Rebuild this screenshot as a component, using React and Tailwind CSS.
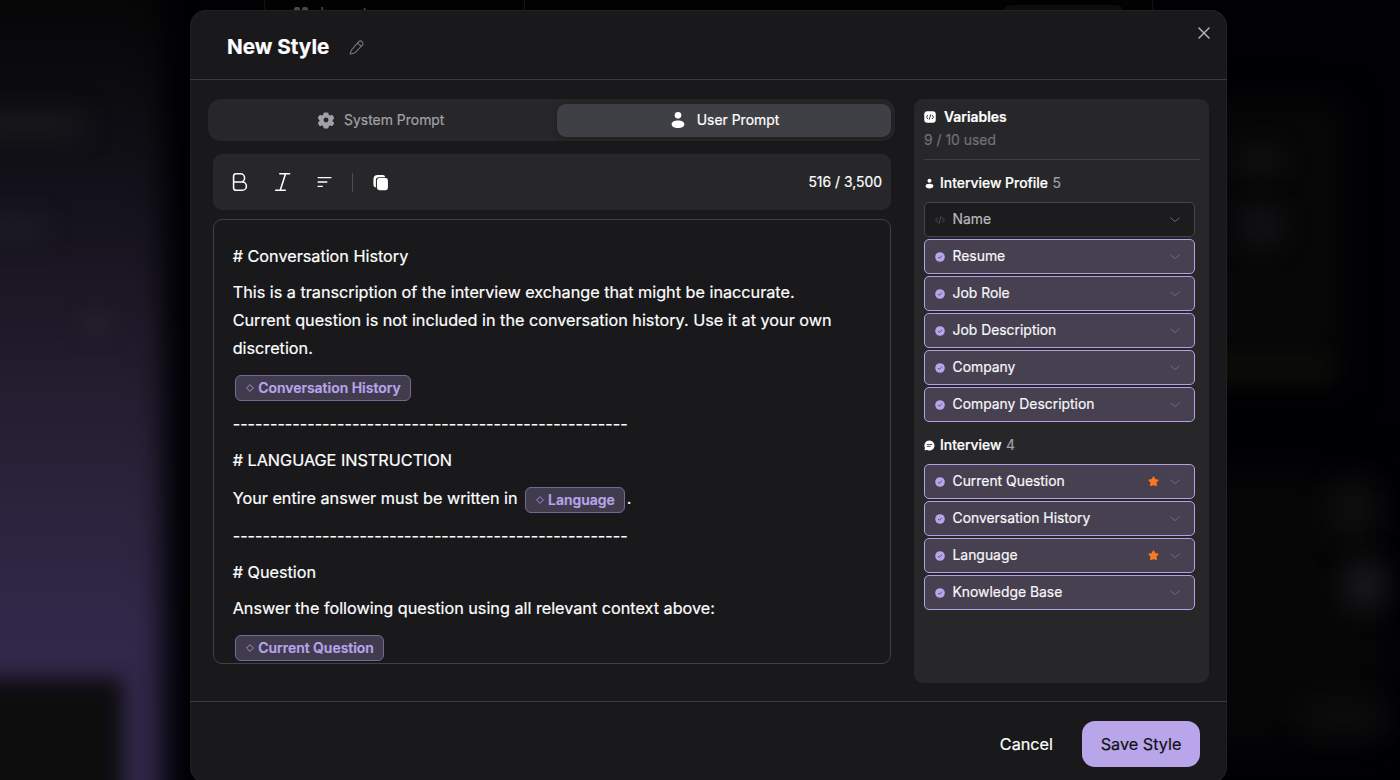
import React from "react";
import { FiX } from "react-icons/fi";

const PROFILE_VARS = [
  { name: "Name", used: false },
  { name: "Resume", used: true },
  { name: "Job Role", used: true },
  { name: "Job Description", used: true },
  { name: "Company", used: true },
  { name: "Company Description", used: true },
];

const INTERVIEW_VARS = [
  { name: "Current Question", used: true, starred: true },
  { name: "Conversation History", used: true },
  { name: "Language", used: true, starred: true },
  { name: "Knowledge Base", used: true },
];

const DIVIDER = "-".repeat(53);

function PenIcon({ className }) {
  return (
    <svg viewBox="0 0 24 24" fill="none" stroke="currentColor" strokeWidth="1.7" strokeLinejoin="round" className={className}>
      <path d="M14.4 3.800l.9-.9a4.100 4.100 0 0 1 5.800 5.800L10.900 18.900c-.8.8-1.200 1.100-1.600 1.400-.5.4-1.100.7-1.700 1L1.700 22.300l1.800-5.100c.3-.7.6-1.300 1-1.800.3-.4.7-.8 1.400-1.500L14.400 3.800z" />
      <path d="M14.400 3.800s.1 2 1.800 3.700 3.800 1.900 3.800 1.900" />
    </svg>
  );
}

function GearIcon({ className }) {
  return (
    <svg viewBox="0 0 24 24" fill="currentColor" fillRule="evenodd" className={className}>
      <path d="M14.3 2.2C13.9 2 13.4 2 12.4 2h-.8c-1 0-1.5 0-1.9.2-.5.2-.9.6-1.1 1.1-.1.3-.1.6-.2 1-.1.6-.4 1.2-.9 1.5-.5.3-1.2.3-1.8 0-.4-.2-.7-.3-1-.4-.5-.1-1.100 0-1.500.4-.4.3-.6.7-1.100 1.500s-.7 1.300-.8 1.700c-.1.5.1 1.100.4 1.500.2.2.4.4.8.7.5.3.9.9.9 1.500s-.4 1.200-.9 1.500c-.4.2-.6.4-.8.7-.3.4-.5.9-.4 1.500.1.400.3.900.8 1.700s.7 1.200 1.100 1.500c.4.3 1 .5 1.500.4.300 0 .600-.2 1-.4.600-.3 1.200-.3 1.800 0 .5.300.9.900.9 1.500 0 .4.100.7.200 1 .200.500.600.900 1.100 1.100.400.200.900.200 1.900.200h.8c1 0 1.500 0 1.900-.2.500-.2.900-.6 1.100-1.100.1-.3.200-.6.200-1 0-.600.400-1.200.900-1.500.500-.3 1.200-.3 1.800 0 .400.200.700.300 1 .400.500.100 1.100-.100 1.500-.400.400-.3.600-.7 1.100-1.500s.7-1.300.8-1.700c.100-.5-.1-1.100-.4-1.500-.2-.2-.4-.4-.8-.7-.5-.3-.9-.9-.9-1.500s.4-1.200.9-1.500c.4-.2.600-.4.8-.7.300-.4.500-.9.400-1.500-.1-.4-.3-.9-.8-1.700s-.7-1.200-1.100-1.500c-.4-.3-1-.5-1.500-.4-.3 0-.6.200-1 .4-.6.300-1.200.3-1.800 0-.5-.3-.9-.9-.9-1.500 0-.4-.1-.7-.2-1-.2-.5-.6-.9-1.100-1.100zM12 15.300a3.300 3.300 0 1 0 0-6.600 3.300 3.300 0 0 0 0 6.600z" />
    </svg>
  );
}

function UserIcon({ className }) {
  return (
    <svg viewBox="0 0 24 24" fill="currentColor" className={className}>
      <circle cx="12" cy="5.800" r="4.400" />
      <path d="M12 12.500c5 0 8.500 1.700 8.500 5.200 0 3.200-3.500 5-8.500 5s-8.500-1.800-8.500-5c0-3.500 3.500-5.200 8.500-5.200z" />
    </svg>
  );
}

function BoldIcon({ className }) {
  return (
    <svg viewBox="0 0 24 24" fill="none" stroke="currentColor" strokeWidth="1.700" className={className}>
      <path d="M5 5.500A2.500 2.500 0 0 1 7.500 3h5a4.500 4.500 0 0 1 0 9H5zM5 12h9.500a4.500 4.500 0 0 1 0 9h-7A2.500 2.500 0 0 1 5 18.500z" />
    </svg>
  );
}

function ItalicIcon({ className }) {
  return (
    <svg viewBox="0 0 24 24" fill="none" stroke="currentColor" strokeWidth="1.700" strokeLinecap="round" className={className}>
      <path d="M8.500 3h10.700M4 21h10.500M14.800 3L9 21" />
    </svg>
  );
}

function TextLinesIcon({ className }) {
  return (
    <svg viewBox="0 0 24 24" fill="none" stroke="currentColor" strokeWidth="1.500" strokeLinecap="round" className={className}>
      <path d="M4.500 7.200h14M4.500 12h9.500M4.500 16.800H9" />
    </svg>
  );
}

function CopyIcon({ className }) {
  return (
    <svg viewBox="0 0 24 24" fill="currentColor" className={className}>
      <rect x="7" y="5.800" width="15.500" height="17.200" rx="3.500" />
      <path d="M5.500 19.200A3.500 3.500 0 0 1 2 15.700V8c0-4.400 1.800-6.500 6-6.500h7.200a3.600 3.600 0 0 1 3.500 3H10c-3.200 0-4.500 1.600-4.500 4.500z" />
    </svg>
  );
}

function CodeSquareIcon({ className }) {
  return (
    <svg viewBox="0 0 24 24" className={className}>
      <rect x="0.500" y="0.500" width="23" height="23" rx="6" fill="#ffffff" />
      <path d="M7.500 8.500L5 12l2.500 3.500M16.500 8.500L19 12l-2.500 3.500M13.300 7.500l-2.600 9" fill="none" stroke="#27272a" strokeWidth="1.800" strokeLinecap="round" />
    </svg>
  );
}

function CodeIcon({ className }) {
  return (
    <svg viewBox="0 0 24 24" fill="none" stroke="currentColor" strokeWidth="1.800" strokeLinecap="round" strokeLinejoin="round" className={className}>
      <path d="M6.500 6.500L1.500 12l5 5.500M17.500 6.500l5 5.500-5 5.500M14.300 3.500l-4.600 17" />
    </svg>
  );
}

function CheckIcon({ className }) {
  return (
    <svg viewBox="0 0 24 24" className={className}>
      <circle cx="12" cy="12" r="11.500" fill="#b8a5ea" />
      <path d="M8 12.700l2.500 2.500L16 9.500" fill="none" stroke="#46404f" strokeWidth="2" strokeLinecap="round" strokeLinejoin="round" />
    </svg>
  );
}

function ChatIcon({ className }) {
  return (
    <svg viewBox="0 0 24 24" className={className}>
      <path d="M12 1a11 11 0 1 1-4.900 20.900c-.6-.3-1.200-.3-1.900-.1l-2.500.7c-.9.200-1.700-.6-1.500-1.500l.7-2.500c.2-.6.100-1.300-.1-1.900A11 11 0 0 1 12 1z" fill="#ffffff" />
      <path d="M7 10h10M7 14h6.500" stroke="#27272a" strokeWidth="1.800" strokeLinecap="round" />
    </svg>
  );
}

function StarIcon({ className }) {
  return (
    <svg viewBox="0 0 24 24" fill="currentColor" stroke="currentColor" strokeWidth="3" strokeLinejoin="round" className={className}>
      <path d="M12 2.500l2.900 5.400 6.600 1.200-4.400 4.800.9 6.600-6-2.200-6 2.200.9-6.600L2.500 9.100l6.600-1.200z" />
    </svg>
  );
}

function ChevronIcon({ className }) {
  return (
    <svg viewBox="0 0 10 6" fill="none" stroke="currentColor" strokeWidth="0.900" strokeLinecap="round" strokeLinejoin="round" className={className}>
      <path d="M.7 1L5 4.600 9.300 1" />
    </svg>
  );
}

function Chip({ children }) {
  return (
    <span className="inline-flex h-[26px] items-center rounded-[6px] border border-[#776996] bg-[#413b4e] pr-[9px] pl-[10px] text-[13.950px] font-semibold text-[#b8a5ea]">
      <svg viewBox="0 0 10 10" fill="none" stroke="currentColor" className="mr-[4.500px] h-[8px] w-[8px]">
        <path d="M5 .8L9.200 5 5 9.200.8 5z" />
      </svg>
      {children}
    </span>
  );
}

function VariableRow({ name, used, starred }) {
  return (
    <div
      className={
        used
          ? "flex h-[35px] items-center rounded-[5px] border border-[#b3a1e3] bg-[#464051] pr-[14px] pl-[10px] text-[#f7f7f8]"
          : "flex h-[35px] items-center rounded-[5px] border border-[#45454b] bg-[#1c1c1e] pr-[14px] pl-[10px] text-[#b9b9be]"
      }
    >
      {used ? <CheckIcon className="h-[10px] w-[10px]" /> : <CodeIcon className="h-[10px] w-[10px] text-[#5c5c63]" />}
      <span className="ml-[7.500px] flex-1 text-[13.900px]">{name}</span>
      {starred && <StarIcon className="mr-[11px] h-[11px] w-[11px] text-[#f97a1f]" />}
      <ChevronIcon className="h-[6px] w-[10px] text-[#72707b]" />
    </div>
  );
}

function VariableGroup({ icon, title, count, items }) {
  return (
    <section>
      <div className="flex h-[22px] items-center text-[13.900px] font-medium text-white">
        {icon}
        <span className="ml-[5px]">{title}</span>
        <span className="ml-[4.500px] font-normal text-[#a1a1aa]">{count}</span>
      </div>
      <div className="mt-[8px] mr-[5px] flex flex-col gap-[2px]">
        {items.map((item) => (
          <VariableRow key={item.name} {...item} />
        ))}
      </div>
    </section>
  );
}

// Dimmed, blurred app behind the dialog
function Backdrop() {
  return (
    <div className="absolute inset-0 overflow-hidden bg-[#010104]">
      <div className="absolute -top-[40px] -left-[40px] h-[880px] w-[203px] bg-[linear-gradient(to_bottom,#060607_5%,#0f0e14_20%,#14121c_28%,#1e1928_41%,#29233a_60%,#31284a_78%,#33294c_100%)] blur-[14px]" />
      <div className="absolute top-[678px] -left-[40px] h-[150px] w-[163px] bg-[#0d0d0e] blur-[10px]" />
      <div className="absolute top-[114px] -left-[30px] h-[22px] w-[115px] rounded-full bg-[#1b1b1e] blur-[13px]" />
      <div className="absolute top-[218px] -left-[20px] h-[20px] w-[66px] rounded-full bg-[#1e1d27] blur-[12px]" />
      <div className="absolute top-[314px] left-[82px] h-[20px] w-[28px] rounded-full bg-[#25222b] blur-[10px]" />
      <div className="absolute top-[100px] left-[1190px] h-[290px] w-[155px] bg-[#070708] blur-[16px]" />
      <div className="absolute top-[148px] left-[1238px] h-[26px] w-[46px] rounded-full bg-[#111113] blur-[12px]" />
      <div className="absolute top-[204px] left-[1238px] h-[44px] w-[46px] rounded-full bg-[#121215] blur-[13px]" />
      <div className="absolute top-[358px] left-[1190px] h-[20px] w-[140px] bg-[#0e0d06] blur-[10px]" />
      <div className="absolute top-[470px] left-[1200px] h-[280px] w-[190px] bg-[#060607] blur-[20px]" />
      <div className="absolute top-[480px] left-[1330px] h-[60px] w-[45px] rounded-full bg-[#0e0e10] blur-[14px]" />
      <div className="absolute top-[560px] left-[1345px] h-[50px] w-[40px] rounded-full bg-[#1a1a1e] blur-[14px]" />
      <div className="absolute top-[700px] left-[1300px] h-[32px] w-[85px] rounded-full bg-[#0d0d0f] blur-[14px]" />
      <div className="absolute top-0 left-[264px] flex h-[12px] w-[889px] border-x border-[#111113] bg-[#020203]">
        <div className="relative h-full w-[260px] border-r border-[#151517]">
          <div className="absolute top-[7px] left-[29px] flex gap-[2px]">
            <span className="h-[6px] w-[6px] rounded-[2px] bg-[#4a4a4c]" />
            <span className="h-[6px] w-[6px] rounded-[2px] bg-[#4a4a4c]" />
          </div>
          <span className="absolute top-[5px] left-[55px] text-[15.500px] leading-[18px] text-[#4b4b4e]">Import</span>
        </div>
        <div className="mt-[5px] ml-[478px] h-[20px] w-[121px] rounded-[8px] bg-[#0d0d0f]" />
      </div>
    </div>
  );
}

export default function App() {
  return (
    <div className="relative flex h-[780px] w-[1400px] overflow-hidden bg-black pl-[190px] font-['Inter',sans-serif] text-white [-webkit-text-stroke:0.2px]">
      <Backdrop />

      <div className="relative mt-[10px] flex h-[773px] w-[1037px] flex-col overflow-hidden rounded-[16px] bg-[#19191b] ring-1 ring-[#202022] ring-inset">
        <header className="flex h-[70px] shrink-0 items-start justify-between border-b border-[#3b3b3e] pr-[13px] pl-[37px]">
          <div className="flex h-[74px] items-center">
            <h1 className="text-[20.700px] font-bold">New Style</h1>
            <PenIcon className="ml-[20px] h-[15px] w-[15px] text-[#77777e]" />
          </div>
          <FiX className="mt-[13px] h-[20px] w-[20px] text-[#b4b4b8]" strokeWidth={1.8} />
        </header>

        <main className="flex h-[621px] shrink-0 gap-[19px] pt-[19px] pr-[18px] pl-[18px]">
          <div className="flex w-[687px] flex-col">
            <div className="flex h-[42px] items-center rounded-[13px] bg-[#27272a] p-[4px] text-[13.950px]">
              <div className="mr-[8px] flex h-full flex-1 items-center justify-center gap-[9.500px] text-[#a1a1aa]">
                <GearIcon className="h-[18px] w-[18px]" />
                System Prompt
              </div>
              <div className="flex h-[33px] w-[334px] items-center justify-center gap-[10px] rounded-[9px] bg-[#3f3f46] shadow-[0_1px_6px_rgba(0,0,0,0.3)]">
                <UserIcon className="h-[18px] w-[18px]" />
                User Prompt
              </div>
            </div>

            <div className="mt-[13px] ml-[5px] flex h-[56px] w-[678px] items-center rounded-[9px] bg-[#27272a] pr-[9px] pl-[16px]">
              <BoldIcon className="h-[22px] w-[22px]" />
              <ItalicIcon className="ml-[21px] h-[22px] w-[22px]" />
              <TextLinesIcon className="ml-[19.500px] h-[22px] w-[22px]" />
              <div className="ml-[16.500px] h-[19px] w-px bg-[#4c4c53]" />
              <CopyIcon className="ml-[19px] h-[17px] w-[17px]" />
              <span className="ml-auto text-[13.900px]">516 / 3,500</span>
            </div>

            <div className="mt-[9px] ml-[5px] flex h-[445px] w-[678px] flex-col gap-[8.300px] overflow-hidden rounded-[9px] border border-[#414146] pt-[23.300px] pl-[18.700px] text-[16.220px] leading-[27.750px]">
              <p># Conversation History</p>
              <p className="w-[620px]">
                This is a transcription of the interview exchange that might be inaccurate. Current question is not included in the
                conversation history. Use it at your own discretion.
              </p>
              <p className="flex h-[32px] items-center pt-[2px] pl-[2px]">
                <Chip>Conversation History</Chip>
              </p>
              <p>{DIVIDER}</p>
              <p># LANGUAGE INSTRUCTION</p>
              <p className="flex h-[32px] items-center">
                <span className="mr-[7px]">Your entire answer must be written in</span>
                <span className="flex pt-[2px]">
                  <Chip>Language</Chip>
                </span>
                <span className="ml-[2px]">.</span>
              </p>
              <p>{DIVIDER}</p>
              <p># Question</p>
              <p>Answer the following question using all relevant context above:</p>
              <p className="flex h-[32px] shrink-0 items-center pt-[2px] pl-[2px]">
                <Chip>Current Question</Chip>
              </p>
            </div>
          </div>

          <aside className="flex h-[584px] w-[295px] flex-col rounded-[9px] bg-[#27272a] pr-[9px] pl-[10px]">
            <div className="mt-[7px] flex h-[22px] items-center text-[13.900px] font-semibold">
              <CodeSquareIcon className="h-[12px] w-[12px]" />
              <span className="ml-[8px]">Variables</span>
            </div>
            <div className="flex h-[32px] items-start border-b border-[#3f3f46] text-[13.900px] leading-[24px] text-[#71717a]">9 / 10 used</div>
            <div className="mt-[12px]">
              <VariableGroup icon={<UserIcon className="h-[11px] w-[11px]" />} title="Interview Profile" count={5} items={PROFILE_VARS} />
            </div>
            <div className="mt-[12px]">
              <VariableGroup icon={<ChatIcon className="h-[11px] w-[11px]" />} title="Interview" count={4} items={INTERVIEW_VARS} />
            </div>
          </aside>
        </main>

        <footer className="flex flex-1 items-start justify-end border-t border-[#3b3b3e] pt-[19px] pr-[27px] text-[16.230px]">
          <button className="mr-[29px] h-[46px]">Cancel</button>
          <button className="h-[46px] w-[118px] rounded-[13px] bg-[#b8a5ea] text-[#111113]">Save Style</button>
        </footer>
      </div>
    </div>
  );
}
